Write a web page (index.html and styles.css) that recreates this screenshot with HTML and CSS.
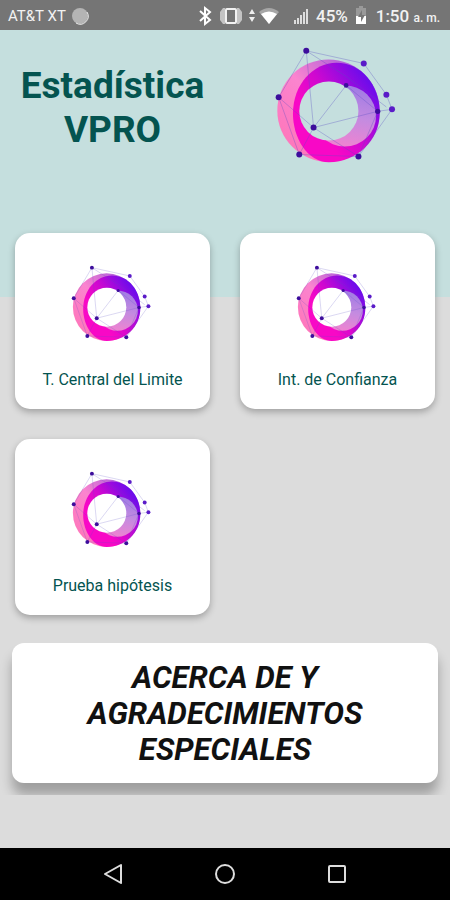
FILE: index.html
```html
<!DOCTYPE html>
<html lang="es">
<head>
  <meta charset="UTF-8">
  <meta name="viewport" content="width=device-width, initial-scale=1.0">
  <title>Estadística VPRO</title>
  <link rel="stylesheet" href="styles.css">
</head>
<body>

  <!-- Logo compartido -->
  <svg class="sprite" width="0" height="0" aria-hidden="true">
    <defs>
      <linearGradient id="gradPink" x1="0" y1="1" x2="1" y2="0">
        <stop offset="0" stop-color="#ff72b4"/>
        <stop offset="0.5" stop-color="#fb84cf"/>
        <stop offset="1" stop-color="#8a50e0"/>
      </linearGradient>
      <linearGradient id="gradMain" gradientUnits="userSpaceOnUse" x1="165" y1="270" x2="335" y2="150">
        <stop offset="0" stop-color="#f808c6"/>
        <stop offset="0.4" stop-color="#cf08d0"/>
        <stop offset="1" stop-color="#6a0cec"/>
      </linearGradient>
      <linearGradient id="gradInner" x1="0.6" y1="0" x2="0.4" y2="1">
        <stop offset="0" stop-color="#a07be4"/>
        <stop offset="0.5" stop-color="#c48be0"/>
        <stop offset="1" stop-color="#f083d0"/>
      </linearGradient>
      <mask id="hole" maskUnits="userSpaceOnUse" x="40" y="35" width="370" height="355">
        <rect x="40" y="35" width="370" height="355" fill="#fff"/>
        <circle cx="205" cy="232" r="89" fill="#000"/>
      </mask>
    </defs>
    <symbol id="logo" viewBox="46 35 370 355" overflow="visible">
      <g mask="url(#hole)">
        <circle cx="204" cy="231" r="154" fill="url(#gradPink)"/>
        <path d="M228 87C302 87 358 152 358 238C358 320 290 386 205 386C140 386 97 312 97 240C97 152 158 87 228 87Z" fill="url(#gradMain)"/>
        <ellipse cx="253" cy="247" rx="94" ry="92" fill="url(#gradInner)"/>
      </g>
      <path class="logo-net" d="M137 51L54 191L116 363L294 369L395 227L378 183L310 89L137 51L159 282L257 155L352 233L159 282L54 191M159 282L116 363M159 282L294 369L352 233L395 227M137 51L257 128L378 220"/>
      <g class="logo-dots">
        <circle cx="137" cy="51" r="9"/>
        <circle cx="54" cy="191" r="9"/>
        <circle cx="116" cy="363" r="9"/>
        <circle cx="159" cy="282" r="9"/>
        <circle cx="294" cy="369" r="9"/>
        <circle cx="257" cy="155" r="7"/>
        <circle cx="352" cy="233" r="8"/>
        <circle cx="310" cy="89" r="9" fill="#5a1bc8"/>
        <circle cx="378" cy="183" r="9" fill="#5a1bc8"/>
        <circle cx="395" cy="227" r="9" fill="#5a1bc8"/>
      </g>
    </symbol>
  </svg>

  <!-- Barra de estado -->
  <div class="status-bar">
    <span class="carrier">AT&amp;T XT</span>
    <svg class="disc" width="18" height="18" viewBox="0 0 18 18"><circle cx="9" cy="9" r="8" fill="#b4b4b4"/><path d="M16 5A8 8 0 0 1 5 16" fill="none" stroke="#e8e8e8" stroke-width="1"/></svg>
    <svg class="icons" width="152" height="22" viewBox="0 0 152 22">
      <path d="M2 6L12 15L7 19V3L12 7L2 16" fill="none" stroke="#fff" stroke-width="2"/>
      <path d="M27 3h-2l-3 4v8l3 4h2zM39 3h2l3 4v8l-3 4h-2z" fill="#c4c4c4"/>
      <rect x="28" y="4" width="10" height="14" rx="1" fill="none" stroke="#f2f2f2" stroke-width="2"/>
      <path d="M51 9l3-5l3 5zM51 12l3 5l3-5z" fill="#eee"/>
      <path d="M61 7Q71-1 81 7L71 19Z" fill="#a6a6a6"/>
      <path d="M63 9Q71 4 79 9L71 19Z" fill="#fff"/>
      <path d="M96 15h2v4h-2zM99 13h2v6h-2zM102 10h2v9h-2zM105 7h2v12h-2zM108 4h2v15h-2z" fill="#ddd"/>
      <text x="118" y="17">45%</text>
    </svg>
    <svg class="battery" width="12" height="20" viewBox="0 0 12 20"><path d="M4 0h4v2h3v16H1V2h3z" fill="#999"/><path d="M1 10h10v8H1z" fill="#fff"/><path d="M7 4L3 11h3v5l4-7H7z" fill="#777"/></svg>
    <span class="clock">1:50 <small>a. m.</small></span>
  </div>

  <main>
    <header class="hero">
      <h1>Estadística VPRO</h1>
      <svg class="hero-logo"><use href="#logo"/></svg>
    </header>

    <!-- Menú principal -->
    <div class="menu">
      <button class="card">
        <svg class="card-logo"><use href="#logo"/></svg>
        <span>T. Central del Limite</span>
      </button>
      <button class="card">
        <svg class="card-logo"><use href="#logo"/></svg>
        <span>Int. de Confianza</span>
      </button>
      <button class="card">
        <svg class="card-logo"><use href="#logo"/></svg>
        <span>Prueba hipótesis</span>
      </button>
    </div>

    <div class="about-wrap">
      <button class="about">ACERCA DE Y AGRADECIMIENTOS ESPECIALES</button>
    </div>
  </main>

  <!-- Navegación del sistema -->
  <nav class="nav-bar">
    <button aria-label="Atrás"><svg width="24" height="24" viewBox="0 0 24 24"><path d="M20 3L4 12L20 21Z"/></svg></button>
    <button aria-label="Inicio"><svg width="24" height="24" viewBox="0 0 24 24"><circle cx="12" cy="12" r="9"/></svg></button>
    <button aria-label="Recientes"><svg width="24" height="24" viewBox="0 0 24 24"><rect x="4" y="4" width="16" height="16" rx="1"/></svg></button>
  </nav>

</body>
</html>
```
FILE: styles.css
```css
* {
  box-sizing: border-box;
}

body {
  margin: 0;
  min-height: 100vh;
  display: flex;
  flex-direction: column;
  font-family: Roboto, "Liberation Sans", sans-serif;
  background-color: #dcdcdc;
}

button {
  border: none;
  padding: 0;
  font-family: inherit;
  cursor: pointer;
}

.sprite {
  position: absolute;
}

.logo-net {
  fill: none;
  stroke: #5b4fc4;
  stroke-width: 2;
  opacity: 0.5;
}

.logo-dots {
  fill: #3d0d9c;
}

/* Barra de estado */
.status-bar {
  display: flex;
  align-items: center;
  height: 30px;
  padding: 2px 10px 0 8px;
  background-color: #757575;
  color: #f2f2f2;
}

.carrier {
  font-size: 15px;
}

.disc {
  margin-left: 5px;
}

.icons {
  margin-left: auto;
}

.icons text {
  font-size: 17px;
  font-weight: 500;
  fill: #f2f2f2;
}

.battery {
  margin: 0 9px 0 5px;
}

.clock {
  font-size: 17px;
  font-weight: 500;
  white-space: nowrap;
}

.clock small {
  font-size: 12px;
}

/* Contenido */
main {
  flex: 1;
  background: linear-gradient(#c5dfde 267px, #dcdcdc 267px);
}

.hero {
  display: grid;
  grid-template-columns: 1fr 1fr;
  justify-items: center;
  height: 203px;
  padding-top: 15px;
}

.hero h1 {
  margin: 19px 0 0;
  max-width: 200px;
  font-size: 37px;
  line-height: 44px;
  text-align: center;
  color: #045450;
}

.hero-logo {
  width: 123px;
  height: 119px;
  overflow: visible;
}

.menu {
  display: grid;
  grid-template-columns: 1fr 1fr;
  gap: 30px;
  padding: 0 15px;
}

.card {
  display: flex;
  flex-direction: column;
  align-items: center;
  height: 176px;
  padding-top: 31px;
  border-radius: 15px;
  background-color: #fff;
  box-shadow: 0 3px 7px rgba(0, 0, 0, 0.28);
  font-size: 16px;
  line-height: 20px;
  color: #045450;
}

.card-logo {
  width: 81px;
  height: 78px;
  margin-bottom: 28px;
  overflow: visible;
}

/* La sombra se corta en el borde inferior */
.about-wrap {
  padding: 28px 12px 12px;
  overflow: hidden;
}

.about {
  display: block;
  width: 100%;
  padding: 17px 60px 15px;
  border-radius: 12px;
  background-color: #fff;
  box-shadow: 0 12px 12px rgba(0, 0, 0, 0.28);
  font-size: 31px;
  font-weight: 700;
  font-style: italic;
  line-height: 36px;
  color: #111;
}

/* Navegación del sistema */
.nav-bar {
  display: flex;
  justify-content: center;
  gap: 88px;
  height: 52px;
  background-color: #000;
}

.nav-bar button {
  display: flex;
  align-items: center;
  background: none;
}

.nav-bar svg {
  fill: none;
  stroke: #ddd;
  stroke-width: 2;
  stroke-linejoin: round;
}
```
